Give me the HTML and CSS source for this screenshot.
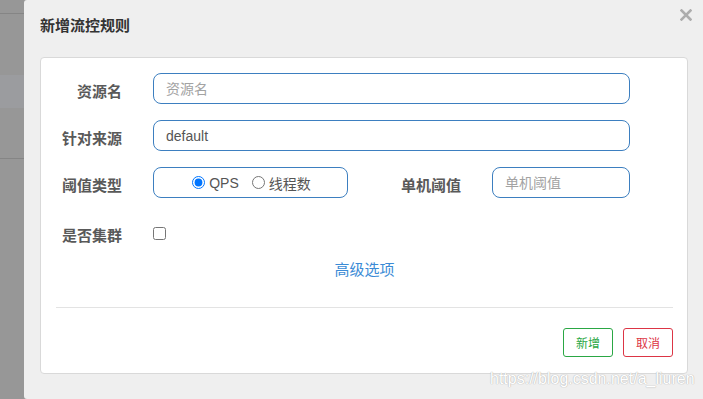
FILE: index.html
```html
<!DOCTYPE html>
<html lang="zh-CN">
<head>
    <meta charset="UTF-8">
    <title>新增流控规则</title>
    <link rel="stylesheet" href="styles.css">
</head>
<body>
    <div class="backdrop">
        <div class="bd-line bd-first"></div>
        <div class="bd-band"></div>
        <div class="bd-line bd-second"></div>
    </div>

    <div class="modal">
        <div class="modal-header">
            <h4 class="modal-title">新增流控规则</h4>
            <button class="close" type="button">
                <svg width="12" height="12" viewBox="0 0 12 12">
                    <path d="M1.5 1.5 L10.5 10.5 M10.5 1.5 L1.5 10.5" stroke="#adadad" stroke-width="2.6" stroke-linecap="square"/>
                </svg>
            </button>
        </div>

        <div class="card">
            <div class="form-row">
                <label class="label">资源名</label>
                <input class="input input-wide" type="text" placeholder="资源名">
            </div>
            <div class="form-row">
                <label class="label">针对来源</label>
                <input class="input input-wide" type="text" value="default">
            </div>
            <div class="form-row">
                <label class="label">阈值类型</label>
                <div class="radio-box">
                    <label class="radio"><input type="radio" name="grade" checked>QPS</label>
                    <label class="radio"><input type="radio" name="grade">线程数</label>
                </div>
                <label class="label label-inline">单机阈值</label>
                <input class="input input-small" type="text" placeholder="单机阈值">
            </div>
            <div class="form-row row-check">
                <label class="label">是否集群</label>
                <input class="check" type="checkbox">
            </div>

            <div class="advanced"><a href="#">高级选项</a></div>

            <div class="divider"></div>

            <div class="actions">
                <button class="btn btn-ok">新增</button>
                <button class="btn btn-cancel">取消</button>
            </div>
        </div>

        <div class="watermark">https://blog.csdn.net/a_liuren</div>
    </div>
</body>
</html>
```

FILE: styles.css
```css
* {
    margin: 0;
    padding: 0;
    box-sizing: border-box;
}

body {
    width: 703px;
    height: 399px;
    display: flex;
    overflow: hidden;
    background: #999;
    font-family: "Liberation Sans", "Noto Sans CJK SC", sans-serif;
}

.backdrop {
    width: 24px;
    flex-shrink: 0;
    background: #979797;
}

.bd-line {
    height: 1px;
    background: #858585;
}

.bd-first {
    margin-top: 13px;
}

.bd-band {
    margin-top: 61px;
    height: 33px;
    background: #9b9c9f;
}

.bd-second {
    margin-top: 50px;
}

.modal {
    flex: 1;
    position: relative;
    background: #efefef;
    border-radius: 3px 0 0 3px;
    padding: 0 15px 0 16px;
}

.modal-header {
    display: flex;
    justify-content: space-between;
    padding: 15px 0 21px 0;
}

.modal-title {
    font-size: 15px;
    line-height: 21px;
    font-weight: bold;
    color: #333;
}

.close {
    border: none;
    background: none;
    margin: -6px -4px 0 0;
    width: 12px;
    height: 12px;
    cursor: pointer;
}

.close svg {
    display: block;
}

.card {
    background: #fff;
    border: 1px solid #d9d9d9;
    border-radius: 4px;
    padding: 15px 14px 16px 15px;
}

.form-row {
    display: flex;
    align-items: center;
    height: 31px;
    margin-bottom: 16px;
}

.label {
    width: 66px;
    flex-shrink: 0;
    text-align: right;
    font-size: 15px;
    font-weight: bold;
    color: #595959;
    margin-right: 31px;
    padding-top: 4px;
}

.label-inline {
    width: 113px;
    margin-right: 31px;
}

.input {
    height: 31px;
    border: 1px solid #3d7fc0;
    border-radius: 8px;
    padding: 0 12px;
    font-family: "Liberation Sans", "Noto Sans CJK SC", sans-serif;
    font-size: 14px;
    color: #555;
    outline: none;
}

.input::placeholder {
    color: #a3a3a3;
}

.input-wide {
    flex: 1;
    margin-right: 43px;
}

.input-small {
    width: 138px;
}

.radio-box {
    width: 195px;
    height: 31px;
    border: 1px solid #3d7fc0;
    border-radius: 8px;
    display: flex;
    justify-content: center;
    align-items: center;
    gap: 13px;
    padding-left: 2px;
}

.radio {
    display: flex;
    align-items: center;
    font-size: 14px;
    color: #555;
}

.radio input {
    width: 13px;
    height: 13px;
    margin: 0 4px 0 0;
}

.row-check {
    height: 36px;
    margin-bottom: 10px;
}

.check {
    width: 13px;
    height: 13px;
    margin: 2px 0 0 0;
}

.advanced {
    text-align: center;
    line-height: 20px;
    font-size: 15px;
}

.advanced a {
    color: #3b8bd6;
    text-decoration: none;
}

.divider {
    height: 1px;
    background: #e3e3e3;
    margin-top: 27px;
}

.actions {
    display: flex;
    justify-content: flex-end;
    gap: 10px;
    margin-top: 20px;
}

.btn {
    width: 50px;
    height: 29px;
    background: #fff;
    border-radius: 3px;
    font-family: "Liberation Sans", "Noto Sans CJK SC", sans-serif;
    font-size: 12px;
    cursor: pointer;
}

.btn-ok {
    border: 1px solid #2aa744;
    color: #2aa744;
}

.btn-cancel {
    border: 1px solid #dc3545;
    color: #dc3545;
}

.watermark {
    position: absolute;
    left: 466px;
    top: 370px;
    font-size: 16px;
    line-height: 18px;
    color: #fff;
    text-shadow: 0 0 1px #b4b4b4, 0 0 1px #b4b4b4;
    pointer-events: none;
}
```
